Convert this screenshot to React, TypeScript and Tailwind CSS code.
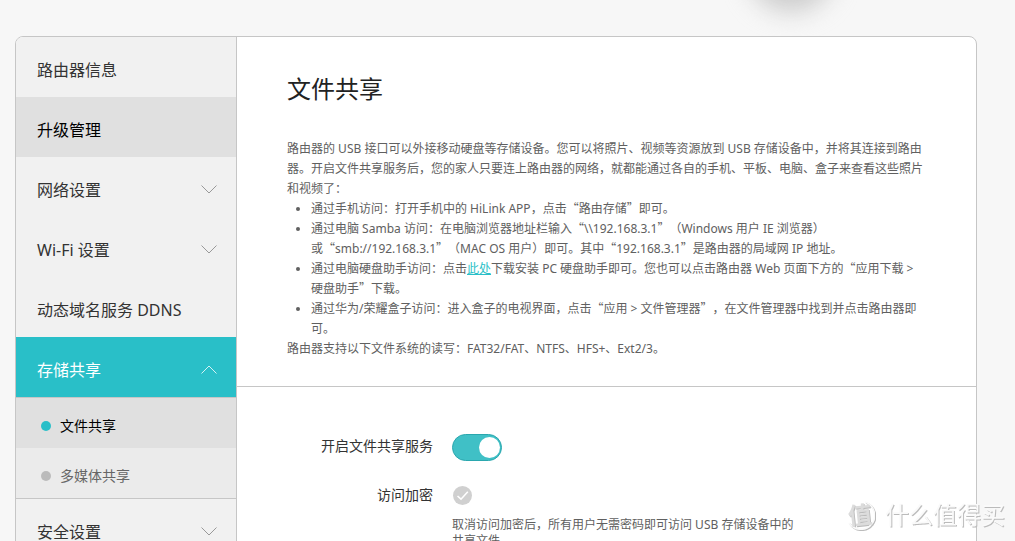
import React from "react";

const pageFont = "font-['Noto_Sans','Noto_Sans_CJK_SC',sans-serif] [text-spacing-trim:space-all]";

function Chevron({ up = false }: { up?: boolean }) {
  return (
    <svg width="16" height="9" viewBox="0 0 16 9" fill="none" stroke="currentColor" strokeWidth="1" aria-hidden="true">
      {up ? <path d="M0.5 8.5 L8 1 L15.5 8.5" /> : <path d="M0.5 0.5 L8 8 L15.5 0.5" />}
    </svg>
  );
}

function Quote({ children }: { children: React.ReactNode }) {
  return (
    <>
      <span className="font-['Noto_Sans_CJK_SC',sans-serif] leading-none">“</span>
      {children}
      <span className="font-['Noto_Sans_CJK_SC',sans-serif] leading-none">”</span>
    </>
  );
}

type Item = { label: string; chevron?: boolean; hover?: boolean };

const before: Item[] = [
  { label: "路由器信息" },
  { label: "升级管理", hover: true },
  { label: "网络设置", chevron: true },
  { label: "Wi-Fi 设置", chevron: true },
  { label: "动态域名服务 DDNS" },
];

function MenuItem({ label, chevron, hover }: Item) {
  return (
    <li>
      <a
        href="#"
        className={`flex h-[60px] items-center justify-between pt-1.5 pr-[19px] pl-[21px] text-base ${
          hover ? "bg-[#e0e0e0] text-black" : "text-[#333]"
        }`}
      >
        {label}
        {chevron && (
          <span className="pb-0.5 text-[#999]">
            <Chevron />
          </span>
        )}
      </a>
    </li>
  );
}

function SubItem({ label, active = false }: { label: string; active?: boolean }) {
  return (
    <li>
      <a
        href="#"
        className={`flex h-[50px] items-center gap-[9px] pt-1.5 pl-[25px] text-sm ${
          active ? "bg-[#e0e0e0] text-black" : "text-[#666]"
        }`}
      >
        <span className={`size-2.5 rounded-full ${active ? "bg-[#29bfc8]" : "bg-[#bbb]"}`} />
        {label}
      </a>
    </li>
  );
}

export default function App() {
  return (
    <div lang="zh-CN" className={`relative h-screen overflow-hidden bg-[#f7f7f7] pt-9 pr-[38px] pl-[15px] ${pageFont}`}>
      <div className="absolute -top-[76px] left-[747px] size-[88px] rounded-full bg-[#ccc] blur-md" />

      <div className="relative flex overflow-hidden rounded-t-lg border border-[#c6c6c6] bg-white">
        <nav className="w-[221px] shrink-0 border-r border-[#c6c6c6] bg-[#f1f1f1]">
          <ul>
            {before.map((item) => (
              <MenuItem key={item.label} {...item} />
            ))}
            <li>
              <button
                type="button"
                aria-expanded="true"
                className="flex h-[60px] w-full items-center justify-between bg-[#29bfc8] pt-1.5 pr-[19px] pl-[21px] text-base text-white"
              >
                存储共享
                <span className="pb-0.5 opacity-80">
                  <Chevron up />
                </span>
              </button>
              <ul className="border-y border-[#c6c6c6] bg-[#ebebeb]">
                <SubItem label="文件共享" active />
                <SubItem label="多媒体共享" />
              </ul>
            </li>
            <MenuItem label="安全设置" chevron />
          </ul>
        </nav>

        <main className="min-w-0 flex-1">
          <section className="border-b border-[#c6c6c6] px-[50px] pt-8 pb-[27px]">
            <h1 className="text-2xl leading-10 text-[#222]">文件共享</h1>
            <div className="pt-[30px] text-xs leading-5 text-[#606060]">
              <p>
                路由器的 USB 接口可以外接移动硬盘等存储设备。您可以将照片、视频等资源放到 USB
                存储设备中，并将其连接到路由器。开启文件共享服务后，您的家人只要连上路由器的网络，就都能通过各自的手机、平板、电脑、盒子来查看这些照片和视频了：
              </p>
              <ul className="list-disc pl-6">
                <li>
                  通过手机访问：打开手机中的 HiLink APP，点击<Quote>路由存储</Quote>即可。
                </li>
                <li>
                  通过电脑 Samba 访问：在电脑浏览器地址栏输入<Quote>\\192.168.3.1</Quote>（Windows 用户 IE 浏览器）
                  <br />
                  或<Quote>smb://192.168.3.1</Quote>（MAC OS 用户）即可。其中<Quote>192.168.3.1</Quote>是路由器的局域网 IP 地址。
                </li>
                <li>
                  通过电脑硬盘助手访问：点击
                  <a href="#" className="text-[#29bfc8] underline">
                    此处
                  </a>
                  下载安装 PC 硬盘助手即可。您也可以点击路由器 Web 页面下方的<Quote>应用下载 &gt; 硬盘助手</Quote>下载。
                </li>
                <li>
                  通过华为/荣耀盒子访问：进入盒子的电视界面，点击<Quote>应用 &gt; 文件管理器</Quote>，在文件管理器中找到并点击路由器即可。
                </li>
              </ul>
              <p>路由器支持以下文件系统的读写：FAT32/FAT、NTFS、HFS+、Ext2/3。</p>
            </div>
          </section>

          <form className="grid grid-cols-[196px_350px] gap-x-[19px] pt-[47px] text-sm text-[#333]">
            <label htmlFor="share" className="text-right leading-6">
              开启文件共享服务
            </label>
            <span className="relative h-[27px] w-[50px]">
              <input
                id="share"
                type="checkbox"
                role="switch"
                defaultChecked
                className="block h-[27px] w-[50px] appearance-none rounded-full border border-[#2aa7ae] bg-[#40c0c6]"
              />
              <span className="pointer-events-none absolute top-[3px] right-0.5 size-[21px] rounded-full bg-white" />
            </span>

            <label htmlFor="encrypt" className="pt-[22px] text-right leading-6">
              访问加密
            </label>
            <span className="pt-[25px] pl-px">
              <span className="relative block size-[19px]">
                <input
                  id="encrypt"
                  type="checkbox"
                  defaultChecked
                  className="block size-[19px] appearance-none rounded-full bg-[#d0d0d0]"
                />
                <svg
                  className="pointer-events-none absolute inset-0"
                  width="19"
                  height="19"
                  viewBox="0 0 19 19"
                  fill="none"
                  stroke="#fff"
                  strokeWidth="1.6"
                  aria-hidden="true"
                >
                  <path d="M4.5 10 L8 13.2 L14.8 5.8" />
                </svg>
              </span>
            </span>

            <p className="col-start-2 pt-2.5 text-xs leading-4 text-[#606060]">
              取消访问加密后，所有用户无需密码即可访问 USB 存储设备中的共享文件。
            </p>
          </form>
        </main>
      </div>

      <div className="absolute right-2.5 bottom-2 flex items-center gap-2.5 text-[#fafafa] drop-shadow-[1px_1px_0px_#bbb]">
        <span className="relative flex size-[30px] items-center justify-center">
          <svg className="absolute inset-0" width="30" height="30" viewBox="0 0 30 30" fill="none" aria-hidden="true">
            <path d="M20 2 A14 14 0 1 1 4 23" stroke="currentColor" strokeWidth="1.5" />
          </svg>
          <span className="-rotate-6 text-2xl font-bold text-[#dcdcdc]">值</span>
        </span>
        <span className="text-2xl leading-9">什么值得买</span>
      </div>
    </div>
  );
}
